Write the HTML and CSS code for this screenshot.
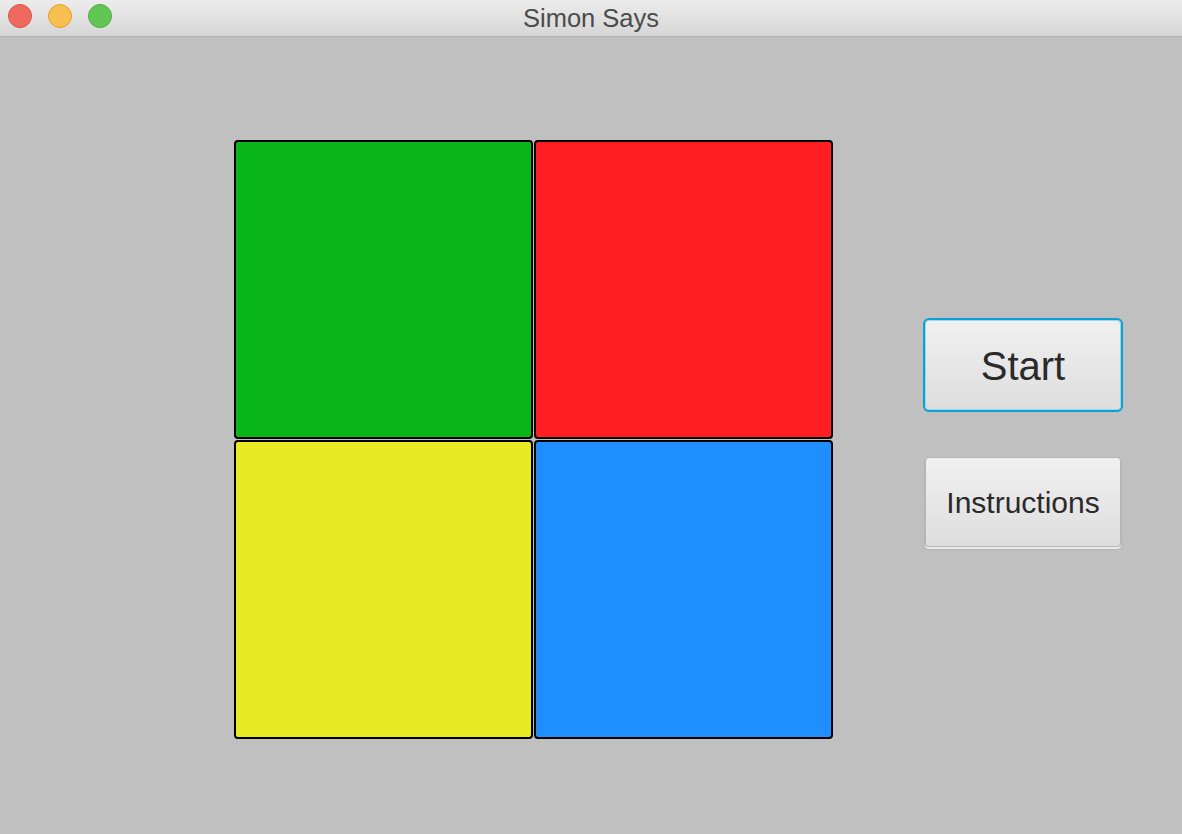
FILE: index.html
```html
<!DOCTYPE html>
<html>
<head>
<meta charset="utf-8">
<title>Simon Says</title>
<link rel="stylesheet" href="styles.css">
</head>
<body>
<div class="window">
  <div class="titlebar">
    <div class="lights">
      <span class="light red"></span>
      <span class="light yellow"></span>
      <span class="light green"></span>
    </div>
    <div class="title">Simon Says</div>
  </div>
  <div class="content">
    <div class="board">
      <div class="pad pad-green"></div>
      <div class="pad pad-red"></div>
      <div class="pad pad-yellow"></div>
      <div class="pad pad-blue"></div>
    </div>
    <div class="controls">
      <button class="btn btn-start focused">Start</button>
      <button class="btn btn-instr">Instructions</button>
    </div>
  </div>
</div>
</body>
</html>
```
FILE: styles.css
```css
html, body {
  margin: 0;
  padding: 0;
}
body {
  width: 1182px;
  height: 834px;
  overflow: hidden;
  font-family: "Liberation Sans", Arial, sans-serif;
  background: #c0c0c0;
}
.window {
  display: flex;
  flex-direction: column;
  height: 834px;
}
.titlebar {
  position: relative;
  height: 36px;
  border-bottom: 1px solid #b4b4b4;
  background: linear-gradient(#ececec, #d6d6d6);
  display: flex;
  align-items: center;
  justify-content: center;
  flex: none;
}
.lights {
  position: absolute;
  left: 8px;
  top: 4px;
  display: flex;
  gap: 16px;
}
.light {
  width: 22px;
  height: 22px;
  border-radius: 50%;
  border: 1px solid transparent;
}
.light.red { background: #f0695e; border-color: #dc5148; }
.light.yellow { background: #f8bf50; border-color: #dea236; }
.light.green { background: #61c653; border-color: #4ead40; }
.title {
  font-size: 25.5px;
  color: #4b4b4b;
  margin-top: 1px;
}
.content {
  flex: 1;
  display: flex;
  align-items: flex-start;
  padding: 103px 0 0 234px;
}
.board {
  display: grid;
  grid-template-columns: 299px 299px;
  grid-template-rows: 299px 299px;
  gap: 1px;
}
.pad {
  box-sizing: border-box;
  border: 2px solid #000;
  border-radius: 4px;
}
.pad-green { background: #0ab71a; }
.pad-red { background: #ff1f22; }
.pad-yellow { background: #e8ea24; }
.pad-blue { background: #1f8fff; }
.controls {
  margin-left: 92px;
  margin-top: 180px;
  display: flex;
  flex-direction: column;
  gap: 47px;
}
.btn {
  box-sizing: border-box;
  width: 196px;
  height: 90px;
  border: 1px solid #b6b6b6;
  border-radius: 4px;
  background: linear-gradient(#f0f0f0, #dedede);
  box-shadow: 0 2px 0 0 #eaeaea, 0 2px 1px 1px rgba(0,0,0,0.06);
  font-family: "Liberation Sans", Arial, sans-serif;
  color: #2a2a2a;
  padding: 0;
}
.btn-start {
  font-size: 40px;
  padding-top: 3px;
}
.btn-start.focused {
  border: 1px solid #9fd6ec;
  box-shadow: 0 0 0 2px #0aa0d8;
}
.btn-instr {
  font-size: 30px;
  padding-top: 1px;
}
```
